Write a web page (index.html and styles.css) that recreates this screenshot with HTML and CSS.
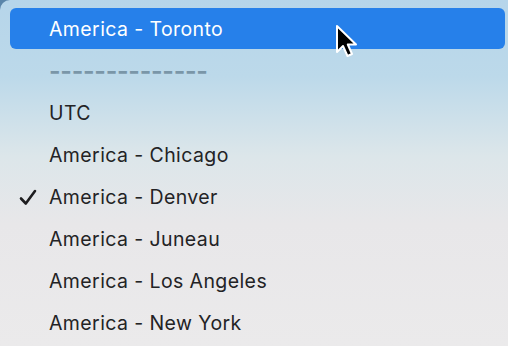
FILE: index.html
```html
<!DOCTYPE html>
<html lang="en">
<head>
    <meta charset="UTF-8">
    <title>Time zone menu</title>
    <link rel="stylesheet" href="styles.css">
</head>
<body>
    <div class="menu">
        <!-- Hovered item -->
        <div class="item active">America - Toronto</div>
        <div class="item separator">--------------</div>

        <div class="item">UTC</div>
        <div class="item">America - Chicago</div>
        <div class="item checked">
            <svg class="check" width="18" height="17" viewBox="0 0 18 17">
                <path d="M2 9.5 L6.8 14.5 L16 2" fill="none" stroke="#1d1d1f" stroke-width="2.6" stroke-linecap="round" stroke-linejoin="round"/>
            </svg>
            America - Denver
        </div>
        <div class="item">America - Juneau</div>
        <div class="item">America - Los Angeles</div>
        <div class="item">America - New York</div>

        <!-- Mouse pointer -->
        <svg class="cursor" width="26" height="40" viewBox="0 0 26 40">
            <path d="M2 2 L2 28 L8 22 L12.5 32 L17 30 L12.8 20.5 L21 20.5 Z" fill="#000" stroke="#fff" stroke-width="2" stroke-linejoin="round"/>
        </svg>
    </div>
</body>
</html>
```

FILE: styles.css
```css
body {
    margin: 0;
    font-family: Inter, "Noto Sans", sans-serif;
    background-color: #5a85aa;
}

.menu {
    position: relative;
    width: 508px;
    height: 346px;
    box-sizing: border-box;
    padding-top: 8px;
    border-top-left-radius: 10px;
    background: linear-gradient(180deg, #b6d5ea 0%, #bcd9ea 22%, #dce6ea 45%, #e8e7e9 65%, #ebeaeb 100%);
    overflow: hidden;
}

.item {
    position: relative;
    display: flex;
    align-items: center;
    height: 42px;
    margin: 0 3px 0 10px;
    padding-left: 39px;
    font-size: 19.5px;
    color: #232325;
    letter-spacing: 0.4px;
}

.item.active {
    height: 41px;
    margin-bottom: 1px;
    background-color: #2680ea;
    border-radius: 6px;
    color: #fff;
}

.item.separator {
    color: #7a96a8;
    font-size: 25px;
    font-weight: 600;
    letter-spacing: -0.3px;
}

.check {
    position: absolute;
    left: 9px;
    top: 13px;
}

.cursor {
    position: absolute;
    left: 335px;
    top: 24px;
}
```
